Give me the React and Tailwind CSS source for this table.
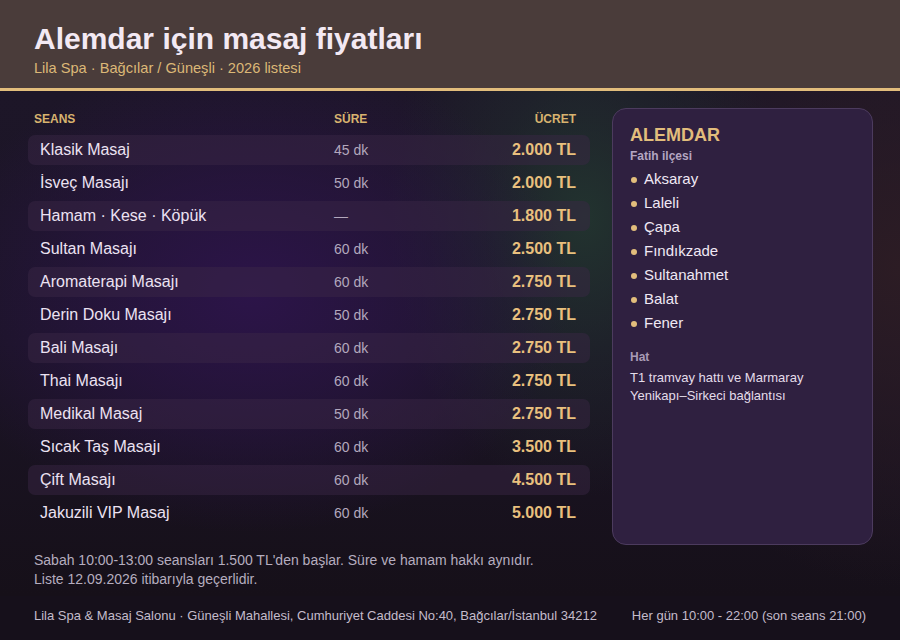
import React from "react";

const rows = [
  ["Klasik Masaj", "45 dk", "2.000 TL"],
  ["İsveç Masajı", "50 dk", "2.000 TL"],
  ["Hamam · Kese · Köpük", "—", "1.800 TL"],
  ["Sultan Masajı", "60 dk", "2.500 TL"],
  ["Aromaterapi Masajı", "60 dk", "2.750 TL"],
  ["Derin Doku Masajı", "50 dk", "2.750 TL"],
  ["Bali Masajı", "60 dk", "2.750 TL"],
  ["Thai Masajı", "60 dk", "2.750 TL"],
  ["Medikal Masaj", "50 dk", "2.750 TL"],
  ["Sıcak Taş Masajı", "60 dk", "3.500 TL"],
  ["Çift Masajı", "60 dk", "4.500 TL"],
  ["Jakuzili VIP Masaj", "60 dk", "5.000 TL"],
];

const places = ["Aksaray", "Laleli", "Çapa", "Fındıkzade", "Sultanahmet", "Balat", "Fener"];

export default function App() {
  return (
    <div className="w-[900px] h-[640px] flex flex-col overflow-hidden font-['Liberation_Sans',Arial,sans-serif] bg-[#17111d]">
      <header className="h-[91px] shrink-0 bg-[#4a3c3a] border-b-[3px] border-[#e2bd7c] pl-[34px] pt-[22px]">
        <h1 className="text-[30px] leading-[34px] font-bold text-[#f3e9f3]">Alemdar için masaj fiyatları</h1>
        <p className="text-[14.6px] leading-[18px] mt-[3px] text-[#dcb877]">Lila Spa · Bağcılar / Güneşli · 2026 listesi</p>
      </header>

      <main className="flex-1 flex flex-col bg-[radial-gradient(ellipse_320px_240px_at_28%_40%,#2c1449_0%,rgba(44,20,73,0.55)_50%,transparent_100%),radial-gradient(ellipse_200px_280px_at_65%_25%,#22332f_0%,rgba(34,51,47,0.4)_50%,transparent_100%),radial-gradient(ellipse_280px_320px_at_100%_35%,#2c1c24_0%,transparent_100%),linear-gradient(180deg,#1d1628_0%,#1b1426_50%,#161019_100%)]">
        <div className="flex gap-[22px] pl-[28px] pr-[27px] pt-[17px]">
          <div className="w-[562px]">
            <div className="grid grid-cols-[300px_1fr_auto] h-[20px] mt-[1px] items-center pl-[6px] pr-[14px] text-[12px] font-bold text-[#d8b36f]">
              <span>SEANS</span>
              <span>SÜRE</span>
              <span className="text-right">ÜCRET</span>
            </div>
            <div className="mt-[6px] flex flex-col gap-[3px]">
              {rows.map((r, i) => (
                <div
                  key={r[0]}
                  className={
                    "grid grid-cols-[294px_1fr_auto] h-[30px] items-center pl-[12px] pr-[14px] rounded-[7px] " +
                    (i % 2 === 0 ? "bg-[rgba(60,40,70,0.45)]" : "")
                  }
                >
                  <span className="text-[16px] text-[#ece2f2]">{r[0]}</span>
                  <span className="text-[14px] text-[#b3a8bd]">{r[1]}</span>
                  <span className="text-[16px] font-bold text-[#e9c07e] text-right">{r[2]}</span>
                </div>
              ))}
            </div>
          </div>

          <aside className="w-[261px] h-[437px] rounded-[14px] bg-[#2f2040] border border-[#4c3b5e] pl-[17px] pr-[16px] pt-[16px]">
            <h2 className="text-[18px] leading-[20px] font-bold text-[#e2bd7c]">ALEMDAR</h2>
            <p className="text-[12px] leading-[16px] mt-[3px] font-bold text-[#b4a6c2]">Fatih ilçesi</p>
            <ul className="mt-[3px]">
              {places.map((p) => (
                <li key={p} className="flex items-center h-[24px] text-[15px] text-[#f0e8f4]">
                  <span className="w-[6px] h-[6px] rounded-full bg-[#e2bd7c] ml-[1px] mr-[7px] mt-[2px]" />
                  {p}
                </li>
              ))}
            </ul>
            <p className="text-[12px] leading-[16px] mt-[14px] font-bold text-[#a99bb6]">Hat</p>
            <p className="text-[13px] leading-[18px] mt-[4px] text-[#e4dcea]">
              T1 tramvay hattı ve Marmaray
              <br />
              Yenikapı–Sirkeci bağlantısı
            </p>
          </aside>
        </div>

        <div className="pl-[34px] mt-[6px] text-[14px] leading-[19px] text-[#b5adbf]">
          <p>Sabah 10:00-13:00 seansları 1.500 TL'den başlar. Süre ve hamam hakkı aynıdır.</p>
          <p>Liste 12.09.2026 itibarıyla geçerlidir.</p>
        </div>
      </main>

      <footer className="h-[44px] shrink-0 bg-[#16101b] flex items-center justify-between pl-[34px] pr-[34px] pb-[5px] text-[13px] text-[#c4bccb]">
        <span>Lila Spa &amp; Masaj Salonu · Güneşli Mahallesi, Cumhuriyet Caddesi No:40, Bağcılar/İstanbul 34212</span>
        <span>Her gün 10:00 - 22:00 (son seans 21:00)</span>
      </footer>
    </div>
  );
}
